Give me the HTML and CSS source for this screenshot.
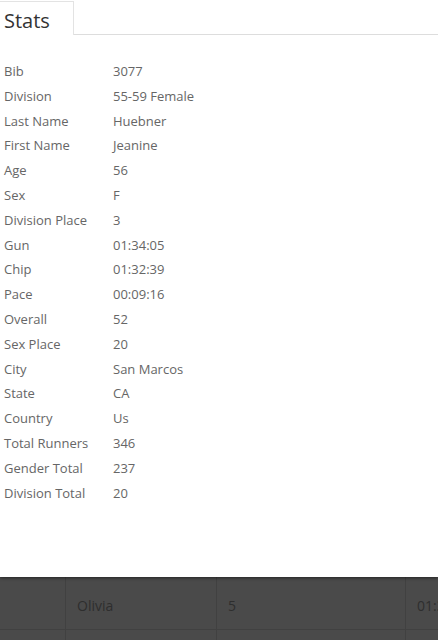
FILE: index.html
```html
<!DOCTYPE html>
<html>
<head>
<meta charset="utf-8">
<link rel="stylesheet" href="styles.css">
</head>
<body>
<div class="modal">
  <div class="tabs">
    <div class="tab">Stats</div>
    <div class="tab-rest"></div>
  </div>
  <dl class="stats">
    <dt>Bib</dt><dd>3077</dd>
    <dt>Division</dt><dd>55-59 Female</dd>
    <dt>Last Name</dt><dd>Huebner</dd>
    <dt>First Name</dt><dd>Jeanine</dd>
    <dt>Age</dt><dd>56</dd>
    <dt>Sex</dt><dd>F</dd>
    <dt>Division Place</dt><dd>3</dd>
    <dt>Gun</dt><dd>01:34:05</dd>
    <dt>Chip</dt><dd>01:32:39</dd>
    <dt>Pace</dt><dd>00:09:16</dd>
    <dt>Overall</dt><dd>52</dd>
    <dt>Sex Place</dt><dd>20</dd>
    <dt>City</dt><dd>San Marcos</dd>
    <dt>State</dt><dd>CA</dd>
    <dt>Country</dt><dd>Us</dd>
    <dt>Total Runners</dt><dd>346</dd>
    <dt>Gender Total</dt><dd>237</dd>
    <dt>Division Total</dt><dd>20</dd>
  </dl>
</div>
<div class="results">
  <div class="row">
    <div class="cell c1"></div>
    <div class="cell c2">Olivia</div>
    <div class="cell c3">5</div>
    <div class="cell c4">01:33:12</div>
  </div>
  <div class="row short">
    <div class="cell c1"></div>
    <div class="cell c2"></div>
    <div class="cell c3"></div>
    <div class="cell c4"></div>
  </div>
</div>
</body>
</html>
```
FILE: styles.css
```css
html, body {
  margin: 0;
  padding: 0;
}
body {
  background: #4a4a4a;
  font-family: "Open Sans", "DejaVu Sans", sans-serif;
  overflow: hidden;
  width: 438px;
  height: 640px;
}
.modal {
  position: relative;
  z-index: 2;
  background: #fff;
  height: 577px;
  box-sizing: border-box;
  padding-top: 1px;
  box-shadow: 0 1px 3px rgba(0,0,0,0.5);
}
.tabs {
  display: flex;
  height: 34px;
}
.tab {
  width: 69px;
  padding: 4px 0 0 4px;
  border-top: 1px solid #e3e3e3;
  border-right: 1px solid #e3e3e3;
  font-size: 20px;
  line-height: 29px;
  color: #333;
  box-sizing: content-box;
}
.tab-rest {
  flex: 1;
  border-bottom: 1px solid #ddd;
}
.stats {
  margin: 0;
  padding: 24px 0 0 0;
  display: grid;
  grid-template-columns: 113px 1fr;
  font-size: 13px;
  color: #666;
}
.stats dt, .stats dd {
  margin: 0;
  line-height: 24.8px;
}
.stats dt {
  padding-left: 4px;
}
.results {
  position: relative;
  z-index: 1;
  overflow: hidden;
  width: 438px;
}
.row {
  display: flex;
  height: 52px;
  border-bottom: 1px solid #414141;
}
.row.short {
  height: 10px;
}
.cell {
  flex: none;
  box-sizing: border-box;
  border-right: 1px solid #414141;
  color: #2e2e2e;
  font-size: 14px;
  padding: 19px 0 0 11px;
  white-space: nowrap;
  overflow: hidden;
}
.c1 { width: 66px; }
.c2 { width: 151px; }
.c3 { width: 189px; }
.c4 { width: 80px; }
```
